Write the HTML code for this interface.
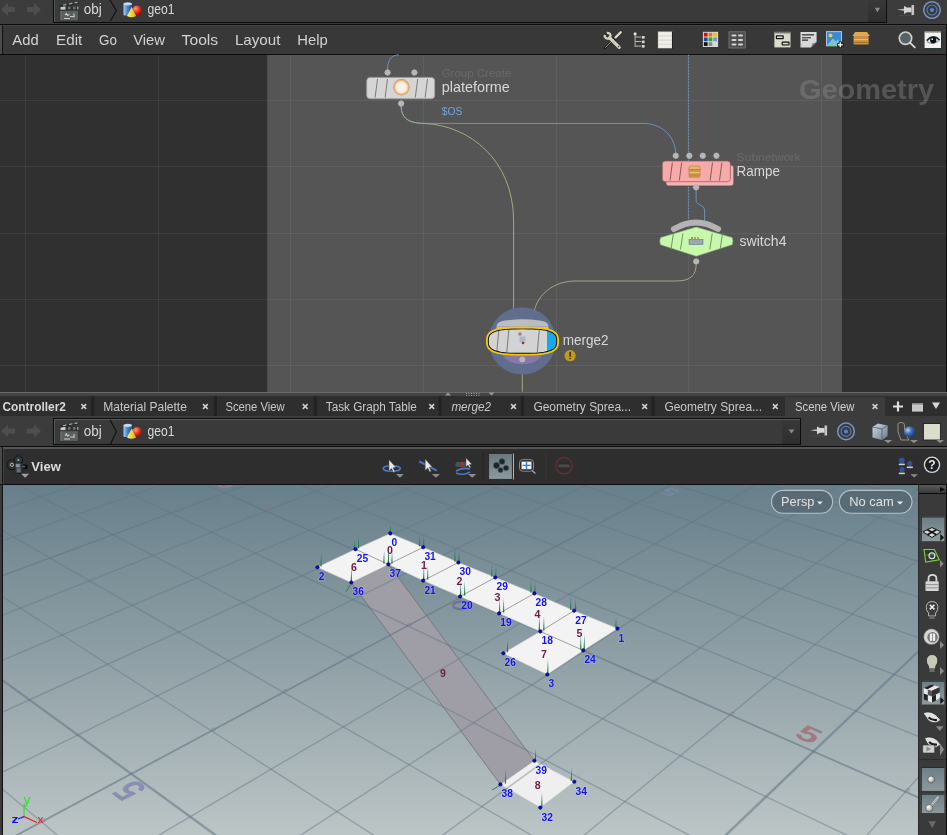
<!DOCTYPE html>
<html><head><meta charset="utf-8"><style>
html,body{margin:0;padding:0;background:#3a3a3a;overflow:hidden;width:947px;height:835px}
svg{display:block;font-family:"Liberation Sans", sans-serif;will-change:transform}
</style></head><body>
<svg width="947" height="835" viewBox="0 0 947 835"><rect x="0" y="0" width="947" height="835" fill="#3a3a3a"/><rect x="0" y="0" width="947" height="24" fill="#3c3c3c"/><path d="M1,9.5 L8,3 L8,7 L15,7 L15,12 L8,12 L8,16 Z" fill="#4e4e4e"/><path d="M41,9.5 L34,3 L34,7 L27,7 L27,12 L34,12 L34,16 Z" fill="#4e4e4e"/><rect x="53" y="0" width="834" height="23" fill="#0c0c0c"/><rect x="54" y="0" width="832" height="22" fill="#3a3a3a"/><rect x="54" y="0" width="1" height="22" fill="#5a5a5a"/><defs><linearGradient id="ddg" x1="0" y1="0" x2="0" y2="1"><stop offset="0" stop-color="#383838"/><stop offset="1" stop-color="#2e2e2e"/></linearGradient></defs><rect x="868" y="0" width="18" height="22" fill="url(#ddg)"/><path d="M874.8,7.8 L880,7.8 L877.4,12.2 Z" fill="#8e8e8e"/><rect x="0" y="24" width="947" height="1" fill="#0c0c0c"/><g transform="translate(59,1)"><rect x="0.8" y="9.3" width="18.6" height="10.6" fill="#5c605c"/><rect x="0.8" y="9.3" width="18.6" height="10.6" fill="none" stroke="#2a3432" stroke-width="0.8"/><rect x="1.6" y="10" width="0.9" height="9" fill="#5a7a5a"/><path d="M6,14 l1.5,-1.5 l1,2 l2,-1 M11,15.5 h4 M15,12.5 v4 M5,17.5 h6" stroke="#c8ccc8" stroke-width="1.1" fill="none"/><rect x="0.8" y="4.8" width="18.6" height="4" fill="#2e3230"/><rect x="1.5" y="5.2" width="5" height="3.4" fill="#c8d0cc"/><rect x="9" y="5.5" width="2.5" height="2.8" fill="#6a706c"/><rect x="14" y="5.5" width="2.5" height="2.8" fill="#6a706c"/><rect x="18" y="5.5" width="1.4" height="2.8" fill="#9aa09c"/><path d="M0.8,4.5 L19.5,0.8 L19.8,2.8 L1,6.2 Z" fill="#262a28"/><path d="M4,4.2 l3.5,-0.7 M10,3 l3.5,-0.7 M15.5,2 l3,-0.6" stroke="#b8bcb8" stroke-width="1.1"/></g><text x="83.7" y="14.3" font-size="14" fill="#d8d8d8" font-weight="normal" font-style="normal" textLength="18" lengthAdjust="spacingAndGlyphs">obj</text><path d="M110,0 L116.4,10.5 L110.5,21" stroke="#151515" stroke-width="1.3" fill="none"/><g transform="translate(123.5,2)"><defs><linearGradient id="cyla" x1="0" x2="1"><stop offset="0" stop-color="#a8cdf0"/><stop offset="0.45" stop-color="#4a86c8"/><stop offset="1" stop-color="#1d4f8c"/></linearGradient><radialGradient id="spha" cx="0.35" cy="0.3" r="0.7"><stop offset="0" stop-color="#ff9a80"/><stop offset="0.6" stop-color="#d92a1a"/><stop offset="1" stop-color="#8a1208"/></radialGradient><linearGradient id="conea" x1="0" x2="1"><stop offset="0" stop-color="#fff48a"/><stop offset="1" stop-color="#d8b400"/></linearGradient></defs><rect x="0" y="1.5" width="8.5" height="12" rx="1" fill="url(#cyla)"/><ellipse cx="4.25" cy="1.8" rx="4.25" ry="1.6" fill="#c0dcf4"/><circle cx="13.6" cy="8.6" r="5" fill="url(#spha)"/><path d="M8.2,5 L3.5,14 Q8,16.5 12.6,14 Z" fill="url(#conea)"/></g><text x="147.6" y="14.3" font-size="14" fill="#d8d8d8" font-weight="normal" font-style="normal" textLength="27" lengthAdjust="spacingAndGlyphs">geo1</text><g transform="translate(897,3.5)"><path d="M0,6.3 L7,5.3 L7,7.3 Z" fill="#c0c0c0"/><path d="M7,2.5 L10,4 L14.5,4 L14.5,8.8 L10,8.8 L7,10.5 Z" fill="#d6d6d6"/><rect x="14.5" y="1.5" width="2.6" height="10" fill="#c4c4c4"/><rect x="2" y="11.5" width="14" height="1" fill="#555" fill-opacity="0.5"/></g><circle cx="932" cy="10" r="8.3" fill="none" stroke="#7494cc" stroke-width="1.5"/><circle cx="932" cy="10" r="5" fill="none" stroke="#5a7ab4" stroke-width="1.1"/><circle cx="932" cy="10" r="2" fill="#4f88dc"/><rect x="0" y="25" width="947" height="29" fill="#383838"/><rect x="0" y="25" width="947" height="1" fill="#444444"/><rect x="0" y="25" width="2" height="29" fill="#4a4a4a"/><rect x="2" y="25" width="1" height="29" fill="#111111"/><rect x="946" y="25" width="1" height="30" fill="#0c0c0c"/><text x="12.3" y="44.6" font-size="15" fill="#d2d2d2" font-weight="normal" font-style="normal" textLength="26.4" lengthAdjust="spacingAndGlyphs">Add</text><text x="56.0" y="44.6" font-size="15" fill="#d2d2d2" font-weight="normal" font-style="normal" textLength="26.3" lengthAdjust="spacingAndGlyphs">Edit</text><text x="99.0" y="44.6" font-size="15" fill="#d2d2d2" font-weight="normal" font-style="normal" textLength="17.9" lengthAdjust="spacingAndGlyphs">Go</text><text x="133.20000000000002" y="44.6" font-size="15" fill="#d2d2d2" font-weight="normal" font-style="normal" textLength="31.7" lengthAdjust="spacingAndGlyphs">View</text><text x="181.6" y="44.6" font-size="15" fill="#d2d2d2" font-weight="normal" font-style="normal" textLength="36.6" lengthAdjust="spacingAndGlyphs">Tools</text><text x="234.9" y="44.6" font-size="15" fill="#d2d2d2" font-weight="normal" font-style="normal" textLength="45.6" lengthAdjust="spacingAndGlyphs">Layout</text><text x="297.2" y="44.6" font-size="15" fill="#d2d2d2" font-weight="normal" font-style="normal" textLength="30.5" lengthAdjust="spacingAndGlyphs">Help</text><rect x="0" y="54" width="947" height="1" fill="#0c0c0c"/><g><path d="M615.8,37.2 L604.8,48" stroke="#1a1a1a" stroke-width="2.4" stroke-linecap="round"/><path d="M615.8,37.2 L605.2,47.6" stroke="#b8b8a8" stroke-width="0.9"/><path d="M620.6,32.3 L615.6,37.4" stroke="#1a1a1a" stroke-width="3.6" stroke-linecap="round"/><path d="M620.6,32.3 L615.6,37.4" stroke="#d6d6c2" stroke-width="2.6" stroke-linecap="round"/><path d="M609.6,37.8 L619.2,47.4" stroke="#d2d2be" stroke-width="3.2" stroke-linecap="round"/><circle cx="618.6" cy="46.6" r="0.8" fill="#555"/><path d="M606.85,33.00 A2.9,2.9 0 1 1 604.80,35.05" stroke="#d6d6c2" stroke-width="2.3" fill="none"/></g><g fill="#d8d8c4"><rect x="633.8" y="32.6" width="2.6" height="2.6" fill="#f0f0f0"/><rect x="634.6" y="35" width="1" height="12" fill="#b8b8a8"/><rect x="635" y="36.5" width="6" height="1" fill="#b8b8a8"/><rect x="635" y="41" width="6" height="1" fill="#b8b8a8"/><rect x="635" y="45.6" width="6" height="1" fill="#b8b8a8"/><rect x="641.8" y="36" width="2.8" height="2.6"/><rect x="641.8" y="40.6" width="2.8" height="2.6"/><rect x="641.8" y="45" width="2.8" height="2.6"/></g><rect x="657.9" y="31.5" width="14.3" height="16.8" fill="#d0d0c8"/><rect x="658.5" y="32.2" width="13.1" height="3.2" fill="#f0f0ea"/><rect x="658.5" y="36.4" width="13.1" height="3.2" fill="#f0f0ea"/><rect x="658.5" y="40.6" width="13.1" height="3.2" fill="#f0f0ea"/><rect x="658.5" y="44.6" width="13.1" height="3.2" fill="#f0f0ea"/><rect x="672.2" y="32" width="0.8" height="16.8" fill="#151515"/><rect x="702.9" y="31.8" width="15.2" height="15.2" fill="#d8d8d4"/><rect x="703.9" y="32.8" width="3.7" height="3.7" fill="#d01010"/><rect x="708.6" y="32.8" width="3.7" height="3.7" fill="#f07010"/><rect x="713.3" y="32.8" width="3.7" height="3.7" fill="#f0c010"/><rect x="703.9" y="37.5" width="3.7" height="3.7" fill="#1a4a9a"/><rect x="708.6" y="37.5" width="3.7" height="3.7" fill="#20b020"/><rect x="713.3" y="37.5" width="3.7" height="3.7" fill="#6a9ad8"/><rect x="703.9" y="42.2" width="3.7" height="3.7" fill="#111111"/><rect x="708.6" y="42.2" width="3.7" height="3.7" fill="#8a8a8a"/><rect x="713.3" y="42.2" width="3.7" height="3.7" fill="#d8d8d8"/><rect x="729" y="31.8" width="16.2" height="16.2" fill="#4e4e4e" stroke="#8a8080" stroke-width="0.7"/><rect x="731.5" y="34.5" width="5" height="2" rx="1" fill="#d4d4d4"/><rect x="738" y="34.5" width="5" height="2" rx="1" fill="#d4d4d4"/><rect x="731.5" y="39" width="5" height="2" rx="1" fill="#d4d4d4"/><rect x="738" y="39" width="5" height="2" rx="1" fill="#d4d4d4"/><rect x="731.5" y="43.5" width="5" height="2" rx="1" fill="#d4d4d4"/><rect x="738" y="43.5" width="5" height="2" rx="1" fill="#d4d4d4"/><rect x="774.4" y="31.9" width="16.1" height="15.5" fill="#dcdccb"/><rect x="774.4" y="31.9" width="16.1" height="1.6" fill="#777"/><rect x="775.8" y="35.2" width="8" height="4" rx="1" fill="#111"/><rect x="777" y="36.4" width="5.6" height="1.6" fill="#ddd"/><rect x="781.6" y="41.6" width="8" height="4" rx="1" fill="#111"/><rect x="782.8" y="42.8" width="5.6" height="1.6" fill="#ddd"/><path d="M800.5,32 L816.6,32 L816.6,42 L811,47.5 L800.5,47.5 Z" fill="#d8d8d8"/><rect x="802" y="34" width="12" height="1.6" fill="#555"/><rect x="802" y="37" width="9" height="1.4" fill="#555"/><rect x="802" y="39.5" width="6" height="1.2" fill="#222"/><path d="M816.6,42 L811,47.5 L812.5,43.5 Z" fill="#777"/><rect x="826" y="31.1" width="16" height="15.2" fill="#a8c8e8"/><rect x="827" y="32.1" width="14" height="13.2" fill="#3a88d8"/><circle cx="830.5" cy="35.5" r="2" fill="#f0d020"/><path d="M827,45.3 L833,38.5 L836,41.5 L838,39.5 L841,43 L841,45.3 Z" fill="#7ac8c0"/><path d="M837,44.8 h6.7 M840.3,41.4 v6.7" stroke="#111" stroke-width="3.2"/><path d="M837.8,44.8 h5 M840.3,42.2 v5" stroke="#e8e8e8" stroke-width="1.6"/><path d="M852.5,36 L855,32 L867,32 L869.8,36 Z" fill="#e0a850"/><rect x="853.5" y="36" width="15.2" height="8.6" rx="1" fill="#c89040"/><rect x="854" y="39" width="14" height="1.2" fill="#e8b868"/><rect x="854" y="42" width="14" height="1" fill="#a87028"/><circle cx="905.5" cy="38.2" r="6.2" fill="#56636a" stroke="#d0d0c8" stroke-width="1.6"/><path d="M909.9,42.6 L914.8,47.4" stroke="#d8d8d8" stroke-width="1.8" stroke-linecap="round"/><rect x="924.6" y="31.7" width="16.6" height="16.6" fill="#f2f2f2"/><rect x="924.6" y="31.7" width="16.6" height="1.2" fill="#a8a8a0"/><rect x="941" y="31.7" width="0.9" height="17" fill="#1a2a2a"/><rect x="924.6" y="48.2" width="17.3" height="0.9" fill="#1a2a2a"/><path d="M926.8,40.6 Q933,33.6 939.6,40" stroke="#1a2a2a" stroke-width="1.7" fill="none"/><path d="M926.8,41.5 Q933,45.8 939.5,40.2" stroke="#9a9a9a" stroke-width="1.3" fill="none"/><circle cx="933.2" cy="40.2" r="3.1" fill="#111"/><circle cx="932.2" cy="39.2" r="0.9" fill="#e8e8e8"/><rect x="0" y="55" width="947" height="337" fill="#303030"/><rect x="267" y="55" width="575" height="337" fill="#555555"/><rect x="267" y="55" width="1" height="337" fill="#4c4c4c"/><rect x="25" y="55" width="1" height="337" fill="#ffffff" fill-opacity="0.062"/><rect x="158" y="55" width="1" height="337" fill="#ffffff" fill-opacity="0.062"/><rect x="290" y="55" width="1" height="337" fill="#ffffff" fill-opacity="0.062"/><rect x="423" y="55" width="1" height="337" fill="#ffffff" fill-opacity="0.062"/><rect x="556" y="55" width="1" height="337" fill="#ffffff" fill-opacity="0.062"/><rect x="688" y="55" width="1" height="337" fill="#ffffff" fill-opacity="0.062"/><rect x="821" y="55" width="1" height="337" fill="#ffffff" fill-opacity="0.062"/><rect x="0" y="100" width="947" height="1" fill="#ffffff" fill-opacity="0.062"/><rect x="0" y="166" width="947" height="1" fill="#ffffff" fill-opacity="0.062"/><rect x="0" y="233" width="947" height="1" fill="#ffffff" fill-opacity="0.062"/><rect x="0" y="299" width="947" height="1" fill="#ffffff" fill-opacity="0.062"/><rect x="0" y="365" width="947" height="1" fill="#ffffff" fill-opacity="0.062"/><text x="799" y="99.4" font-size="28" font-weight="bold" fill="#8a8a8a" fill-opacity="0.42" textLength="135" lengthAdjust="spacingAndGlyphs">Geometry</text><path d="M387.6,70 C387.6,60 391,55 399,54.8" stroke="#7090b8" stroke-width="1" fill="none"/><path d="M401.1,106 C401.5,118 408,123.4 425,123.4 L644,123.4 C664,124 675,138 675.8,153" stroke="#7090b8" stroke-width="1" fill="none"/><path d="M401.1,106 C401.5,118 408,123.4 425,123.4 C470,126 513,160 513.6,220 L513.6,322" stroke="#9cac80" stroke-width="1" fill="none"/><line x1="688.5" y1="54.8" x2="688.5" y2="220" stroke="#6f8fb5" stroke-width="1.2" stroke-dasharray="1.6,1.4"/><path d="M696.1,189 L696.1,200.5 C696.5,206 704.6,204 704.6,211 L704.6,221" stroke="#7090b8" stroke-width="1" fill="none"/><path d="M696.2,264 C696,276 690,281 676,281 L574,281 C548,282 533,300 532.5,322" stroke="#9cac80" stroke-width="1" fill="none"/><line x1="522.3" y1="360" x2="522.3" y2="391.6" stroke="#9cac80" stroke-width="1"/><rect x="366.7" y="77.4" width="68" height="21.4" rx="3.5" fill="#d5d5d5" stroke="#9c9c9c" stroke-width="0.8"/><line x1="377.5" y1="79" x2="375.1" y2="97.5" stroke="#707070" stroke-width="0.9"/><line x1="387.5" y1="79" x2="385.1" y2="97.5" stroke="#707070" stroke-width="0.9"/><line x1="417.7" y1="79" x2="415.3" y2="97.5" stroke="#707070" stroke-width="0.9"/><line x1="427.5" y1="79" x2="425.1" y2="97.5" stroke="#707070" stroke-width="0.9"/><defs><radialGradient id="orb" cx="0.5" cy="0.5" r="0.5"><stop offset="0" stop-color="#f6f4f0"/><stop offset="0.62" stop-color="#f2eee6"/><stop offset="0.8" stop-color="#f0c488"/><stop offset="1" stop-color="#d49040"/></radialGradient></defs><circle cx="401.4" cy="87.3" r="8.2" fill="url(#orb)"/><polygon points="390.80,72.50 389.86,74.76 387.60,75.70 385.34,74.76 384.40,72.50 385.34,70.24 387.60,69.30 389.86,70.24" fill="#b6b6b6"/><polygon points="417.60,72.50 416.66,74.76 414.40,75.70 412.14,74.76 411.20,72.50 412.14,70.24 414.40,69.30 416.66,70.24" fill="#b6b6b6"/><polygon points="404.30,103.50 403.36,105.76 401.10,106.70 398.84,105.76 397.90,103.50 398.84,101.24 401.10,100.30 403.36,101.24" fill="#b6b6b6"/><rect x="665.8" y="165" width="68" height="20.9" rx="3" fill="#f4b3b3" stroke="#5a3a3a" stroke-width="0.6"/><rect x="662.3" y="161" width="68.1" height="20.7" rx="3" fill="#f8a9a9" stroke="#8a5a5a" stroke-width="0.7"/><line x1="672.4000000000001" y1="162.5" x2="670.0" y2="180.5" stroke="#7a5050" stroke-width="0.9"/><line x1="681.7" y1="162.5" x2="679.3" y2="180.5" stroke="#7a5050" stroke-width="0.9"/><line x1="712.5" y1="162.5" x2="710.0999999999999" y2="180.5" stroke="#7a5050" stroke-width="0.9"/><line x1="721.9000000000001" y1="162.5" x2="719.5" y2="180.5" stroke="#7a5050" stroke-width="0.9"/><g><path d="M688.2,169.6 L689.8,166 L699.2,166 L700.8,169.6 Z" fill="#e8b868" stroke="#a07030" stroke-width="0.5"/><rect x="689" y="169.6" width="11" height="7.6" rx="1" fill="#d09a48" stroke="#a07030" stroke-width="0.5"/><rect x="689.5" y="172.2" width="10" height="1" fill="#f0c880"/><rect x="689.5" y="174.6" width="10" height="0.8" fill="#b88038"/></g><polygon points="679.00,155.80 678.06,158.06 675.80,159.00 673.54,158.06 672.60,155.80 673.54,153.54 675.80,152.60 678.06,153.54" fill="#b6b6b6"/><polygon points="692.50,155.80 691.56,158.06 689.30,159.00 687.04,158.06 686.10,155.80 687.04,153.54 689.30,152.60 691.56,153.54" fill="#b6b6b6"/><polygon points="706.00,155.80 705.06,158.06 702.80,159.00 700.54,158.06 699.60,155.80 700.54,153.54 702.80,152.60 705.06,153.54" fill="#b6b6b6"/><polygon points="719.60,155.80 718.66,158.06 716.40,159.00 714.14,158.06 713.20,155.80 714.14,153.54 716.40,152.60 718.66,153.54" fill="#b6b6b6"/><polygon points="699.30,187.20 698.36,189.46 696.10,190.40 693.84,189.46 692.90,187.20 693.84,184.94 696.10,184.00 698.36,184.94" fill="#b6b6b6"/><path d="M674,229 Q696,216 718,229" stroke="#b3b3b3" stroke-width="6" stroke-linecap="round" fill="none"/><path d="M660.5,237.6 L696.2,227 L732.2,237.6 Q733.6,241.2 732.2,244.8 L696.2,256.3 L660.5,244.8 Q659.1,241.2 660.5,237.6 Z" fill="#c8f8ac" stroke="#7e9e6e" stroke-width="0.6" stroke-linejoin="round"/><line x1="673.4000000000001" y1="233.5" x2="671.0" y2="249.5" stroke="#6a8a5a" stroke-width="0.9"/><line x1="682.9000000000001" y1="233.5" x2="680.5" y2="249.5" stroke="#6a8a5a" stroke-width="0.9"/><line x1="712.2" y1="233.5" x2="709.8" y2="249.5" stroke="#6a8a5a" stroke-width="0.9"/><line x1="722.5" y1="233.5" x2="720.0999999999999" y2="249.5" stroke="#6a8a5a" stroke-width="0.9"/><g transform="translate(689,237)"><rect x="0" y="2.5" width="14" height="5" fill="#9aa8b8" stroke="#5a6070" stroke-width="0.5"/><circle cx="3" cy="1" r="0.9" fill="#c05030"/><circle cx="6" cy="1" r="0.9" fill="#50a050"/><circle cx="9" cy="1" r="0.9" fill="#c08030"/></g><polygon points="699.40,261.40 698.46,263.66 696.20,264.60 693.94,263.66 693.00,261.40 693.94,259.14 696.20,258.20 698.46,259.14" fill="#b6b6b6"/><circle cx="522.3" cy="340.9" r="33.7" fill="#5e6e8c"/><ellipse cx="522.3" cy="352.5" rx="20" ry="11.5" fill="#8778a6"/><path d="M496.5,326.5 Q496.5,321.5 505,320.5 Q522.3,318.2 539.6,320.5 Q548.5,321.5 548.5,326.5 Z" fill="#bdbdbd"/><path d="M496.5,326.5 L548.5,326.5 L548.5,329 L496.5,329 Z" fill="#bdbdbd"/><defs><clipPath id="mclip"><path d="M556.80,341.10 L556.71,343.52 L556.45,344.93 L556.02,346.10 L555.41,347.12 L554.62,348.03 L553.66,348.85 L552.53,349.59 L551.22,350.26 L549.72,350.86 L548.05,351.40 L546.18,351.87 L544.11,352.28 L541.82,352.62 L539.27,352.90 L536.43,353.12 L533.18,353.28 L529.24,353.37 L522.50,353.40 L515.76,353.37 L511.82,353.28 L508.57,353.12 L505.73,352.90 L503.18,352.62 L500.89,352.28 L498.82,351.87 L496.95,351.40 L495.28,350.86 L493.78,350.26 L492.47,349.59 L491.34,348.85 L490.38,348.03 L489.59,347.12 L488.98,346.10 L488.55,344.93 L488.29,343.52 L488.20,341.10 L488.29,338.68 L488.55,337.27 L488.98,336.10 L489.59,335.08 L490.38,334.17 L491.34,333.35 L492.47,332.61 L493.78,331.94 L495.28,331.34 L496.95,330.80 L498.82,330.33 L500.89,329.92 L503.18,329.58 L505.73,329.30 L508.57,329.08 L511.82,328.92 L515.76,328.83 L522.50,328.80 L529.24,328.83 L533.18,328.92 L536.43,329.08 L539.27,329.30 L541.82,329.58 L544.11,329.92 L546.18,330.33 L548.05,330.80 L549.72,331.34 L551.22,331.94 L552.53,332.61 L553.66,333.35 L554.62,334.17 L555.41,335.08 L556.02,336.10 L556.45,337.27 L556.71,338.68 Z"/></clipPath></defs><path d="M556.80,341.10 L556.71,343.52 L556.45,344.93 L556.02,346.10 L555.41,347.12 L554.62,348.03 L553.66,348.85 L552.53,349.59 L551.22,350.26 L549.72,350.86 L548.05,351.40 L546.18,351.87 L544.11,352.28 L541.82,352.62 L539.27,352.90 L536.43,353.12 L533.18,353.28 L529.24,353.37 L522.50,353.40 L515.76,353.37 L511.82,353.28 L508.57,353.12 L505.73,352.90 L503.18,352.62 L500.89,352.28 L498.82,351.87 L496.95,351.40 L495.28,350.86 L493.78,350.26 L492.47,349.59 L491.34,348.85 L490.38,348.03 L489.59,347.12 L488.98,346.10 L488.55,344.93 L488.29,343.52 L488.20,341.10 L488.29,338.68 L488.55,337.27 L488.98,336.10 L489.59,335.08 L490.38,334.17 L491.34,333.35 L492.47,332.61 L493.78,331.94 L495.28,331.34 L496.95,330.80 L498.82,330.33 L500.89,329.92 L503.18,329.58 L505.73,329.30 L508.57,329.08 L511.82,328.92 L515.76,328.83 L522.50,328.80 L529.24,328.83 L533.18,328.92 L536.43,329.08 L539.27,329.30 L541.82,329.58 L544.11,329.92 L546.18,330.33 L548.05,330.80 L549.72,331.34 L551.22,331.94 L552.53,332.61 L553.66,333.35 L554.62,334.17 L555.41,335.08 L556.02,336.10 L556.45,337.27 L556.71,338.68 Z" fill="#d3d3d3"/><rect x="547" y="325" width="14" height="35" fill="#16a8ec" clip-path="url(#mclip)"/><line x1="498.8" y1="330" x2="496.8" y2="352" stroke="#707070" stroke-width="0.9" clip-path="url(#mclip)"/><line x1="508.8" y1="330" x2="506.8" y2="352" stroke="#707070" stroke-width="0.9" clip-path="url(#mclip)"/><line x1="539.3" y1="330" x2="537.3" y2="352" stroke="#707070" stroke-width="0.9" clip-path="url(#mclip)"/><path d="M556.80,341.10 L556.71,343.52 L556.45,344.93 L556.02,346.10 L555.41,347.12 L554.62,348.03 L553.66,348.85 L552.53,349.59 L551.22,350.26 L549.72,350.86 L548.05,351.40 L546.18,351.87 L544.11,352.28 L541.82,352.62 L539.27,352.90 L536.43,353.12 L533.18,353.28 L529.24,353.37 L522.50,353.40 L515.76,353.37 L511.82,353.28 L508.57,353.12 L505.73,352.90 L503.18,352.62 L500.89,352.28 L498.82,351.87 L496.95,351.40 L495.28,350.86 L493.78,350.26 L492.47,349.59 L491.34,348.85 L490.38,348.03 L489.59,347.12 L488.98,346.10 L488.55,344.93 L488.29,343.52 L488.20,341.10 L488.29,338.68 L488.55,337.27 L488.98,336.10 L489.59,335.08 L490.38,334.17 L491.34,333.35 L492.47,332.61 L493.78,331.94 L495.28,331.34 L496.95,330.80 L498.82,330.33 L500.89,329.92 L503.18,329.58 L505.73,329.30 L508.57,329.08 L511.82,328.92 L515.76,328.83 L522.50,328.80 L529.24,328.83 L533.18,328.92 L536.43,329.08 L539.27,329.30 L541.82,329.58 L544.11,329.92 L546.18,330.33 L548.05,330.80 L549.72,331.34 L551.22,331.94 L552.53,332.61 L553.66,333.35 L554.62,334.17 L555.41,335.08 L556.02,336.10 L556.45,337.27 L556.71,338.68 Z" fill="none" stroke="#0a0a0a" stroke-width="1.1"/><path d="M558.10,341.10 L558.01,343.77 L557.74,345.33 L557.29,346.62 L556.65,347.75 L555.84,348.76 L554.84,349.67 L553.67,350.49 L552.30,351.23 L550.76,351.89 L549.02,352.49 L547.08,353.01 L544.93,353.46 L542.55,353.84 L539.91,354.15 L536.96,354.39 L533.58,354.56 L529.50,354.67 L522.50,354.70 L515.50,354.67 L511.42,354.56 L508.04,354.39 L505.09,354.15 L502.45,353.84 L500.07,353.46 L497.92,353.01 L495.98,352.49 L494.24,351.89 L492.70,351.23 L491.33,350.49 L490.16,349.67 L489.16,348.76 L488.35,347.75 L487.71,346.62 L487.26,345.33 L486.99,343.77 L486.90,341.10 L486.99,338.43 L487.26,336.87 L487.71,335.58 L488.35,334.45 L489.16,333.44 L490.16,332.53 L491.33,331.71 L492.70,330.97 L494.24,330.31 L495.98,329.71 L497.92,329.19 L500.07,328.74 L502.45,328.36 L505.09,328.05 L508.04,327.81 L511.42,327.64 L515.50,327.53 L522.50,327.50 L529.50,327.53 L533.58,327.64 L536.96,327.81 L539.91,328.05 L542.55,328.36 L544.93,328.74 L547.08,329.19 L549.02,329.71 L550.76,330.31 L552.30,330.97 L553.67,331.71 L554.84,332.53 L555.84,333.44 L556.65,334.45 L557.29,335.58 L557.74,336.87 L558.01,338.43 Z" fill="none" stroke="#f5c800" stroke-width="1.8"/><g transform="translate(514.5,331.5)"><rect x="1" y="1" width="5" height="4" fill="#c8d4e0"/><rect x="4" y="1" width="3" height="3" fill="#b03030" fill-opacity="0.6"/><rect x="5" y="5" width="6" height="6" fill="#a8b8c8"/><rect x="1" y="11" width="7" height="3" fill="#d0d8e4"/><circle cx="8.5" cy="11.5" r="1.3" fill="#c02020"/></g><polygon points="525.50,359.40 524.56,361.66 522.30,362.60 520.04,361.66 519.10,359.40 520.04,357.14 522.30,356.20 524.56,357.14" fill="#b6b6b6"/><circle cx="570.1" cy="355.7" r="5.6" fill="#c49a1c"/><rect x="569.4" y="351.8" width="1.5" height="5" fill="#3a2a00"/><rect x="569.4" y="357.8" width="1.5" height="1.4" fill="#3a2a00"/><text x="441.7" y="76.7" font-size="10" fill="#6a6a6a" font-weight="normal" font-style="normal" textLength="69.6" lengthAdjust="spacingAndGlyphs">Group Create</text><text x="441.7" y="91.6" font-size="14.5" fill="#d8d8d8" font-weight="normal" font-style="normal" textLength="68" lengthAdjust="spacingAndGlyphs">plateforme</text><text x="441.7" y="114.9" font-size="11" fill="#6ea6de" font-weight="normal" font-style="normal" textLength="20.6" lengthAdjust="spacingAndGlyphs">$OS</text><text x="736.6" y="160.5" font-size="10" fill="#6a6a6a" font-weight="normal" font-style="normal" textLength="63.9" lengthAdjust="spacingAndGlyphs">Subnetwork</text><text x="736.6" y="175.7" font-size="14.5" fill="#d8d8d8" font-weight="normal" font-style="normal" textLength="43.3" lengthAdjust="spacingAndGlyphs">Rampe</text><text x="739.5" y="246" font-size="14.5" fill="#d8d8d8" font-weight="normal" font-style="normal" textLength="47" lengthAdjust="spacingAndGlyphs">switch4</text><text x="562.7" y="344.6" font-size="14.5" fill="#d8d8d8" font-weight="normal" font-style="normal" textLength="45.9" lengthAdjust="spacingAndGlyphs">merge2</text><rect x="946" y="55" width="1" height="337" fill="#0c0c0c"/><rect x="0" y="392" width="947" height="1" fill="#6a6a6a"/><rect x="0" y="393" width="947" height="3" fill="#444444"/><path d="M445,395.5 L451,395.5 L448.0,392.5 Z" fill="#9a9a9a"/><path d="M488.5,392.5 L494.5,392.5 L491.5,395.5 Z" fill="#9a9a9a"/><rect x="466.0" y="393" width="1" height="1" fill="#9a9a9a"/><rect x="466.0" y="395" width="1" height="1" fill="#9a9a9a"/><rect x="468.5" y="393" width="1" height="1" fill="#9a9a9a"/><rect x="468.5" y="395" width="1" height="1" fill="#9a9a9a"/><rect x="471.0" y="393" width="1" height="1" fill="#9a9a9a"/><rect x="471.0" y="395" width="1" height="1" fill="#9a9a9a"/><rect x="473.5" y="393" width="1" height="1" fill="#9a9a9a"/><rect x="473.5" y="395" width="1" height="1" fill="#9a9a9a"/><rect x="476.0" y="393" width="1" height="1" fill="#9a9a9a"/><rect x="476.0" y="395" width="1" height="1" fill="#9a9a9a"/><rect x="478.5" y="393" width="1" height="1" fill="#9a9a9a"/><rect x="478.5" y="395" width="1" height="1" fill="#9a9a9a"/><rect x="0" y="396" width="947" height="20" fill="#2e2e2e"/><rect x="91.3" y="396" width="3" height="20" fill="#222222"/><rect x="213.9" y="396" width="3" height="20" fill="#222222"/><rect x="313.8" y="396" width="3" height="20" fill="#222222"/><rect x="438.5" y="396" width="3" height="20" fill="#222222"/><rect x="520.9" y="396" width="3" height="20" fill="#222222"/><rect x="651.5" y="396" width="3" height="20" fill="#222222"/><rect x="785" y="397" width="100" height="19" fill="#3c3c3c"/><text x="2.5" y="411.2" font-size="12.5" fill="#d8d8d8" font-weight="bold" font-style="normal" textLength="63.4" lengthAdjust="spacingAndGlyphs">Controller2</text><path d="M81.39999999999999,404.1 L86.2,408.9 M86.2,404.1 L81.39999999999999,408.9" stroke="#d0d0d0" stroke-width="1.5"/><text x="103.3" y="411.1" font-size="12.5" fill="#c8c8c8" font-weight="normal" font-style="normal" textLength="83.6" lengthAdjust="spacingAndGlyphs">Material Palette</text><path d="M203.0,404.1 L207.8,408.9 M207.8,404.1 L203.0,408.9" stroke="#d0d0d0" stroke-width="1.5"/><text x="225.4" y="411.1" font-size="12.5" fill="#c8c8c8" font-weight="normal" font-style="normal" textLength="59.3" lengthAdjust="spacingAndGlyphs">Scene View</text><path d="M302.8,404.1 L307.59999999999997,408.9 M307.59999999999997,404.1 L302.8,408.9" stroke="#d0d0d0" stroke-width="1.5"/><text x="325.8" y="411.1" font-size="12.5" fill="#c8c8c8" font-weight="normal" font-style="normal" textLength="91.1" lengthAdjust="spacingAndGlyphs">Task Graph Table</text><path d="M429.3,404.1 L434.09999999999997,408.9 M434.09999999999997,404.1 L429.3,408.9" stroke="#d0d0d0" stroke-width="1.5"/><text x="451.4" y="411.1" font-size="12.5" fill="#c8c8c8" font-weight="normal" font-style="italic" textLength="39.6" lengthAdjust="spacingAndGlyphs">merge2</text><path d="M511.1,404.1 L515.9,408.9 M515.9,404.1 L511.1,408.9" stroke="#d0d0d0" stroke-width="1.5"/><text x="533.4" y="411.1" font-size="12.5" fill="#c8c8c8" font-weight="normal" font-style="normal" textLength="97.6" lengthAdjust="spacingAndGlyphs">Geometry Sprea...</text><path d="M642.3000000000001,404.1 L647.1,408.9 M647.1,404.1 L642.3000000000001,408.9" stroke="#d0d0d0" stroke-width="1.5"/><text x="664.4" y="411.1" font-size="12.5" fill="#c8c8c8" font-weight="normal" font-style="normal" textLength="97.6" lengthAdjust="spacingAndGlyphs">Geometry Sprea...</text><path d="M772.9,404.1 L777.6999999999999,408.9 M777.6999999999999,404.1 L772.9,408.9" stroke="#d0d0d0" stroke-width="1.5"/><text x="795" y="411.1" font-size="12.5" fill="#d0d0d0" font-weight="normal" font-style="normal" textLength="59.4" lengthAdjust="spacingAndGlyphs">Scene View</text><path d="M872.6,404.1 L877.4,408.9 M877.4,404.1 L872.6,408.9" stroke="#d0d0d0" stroke-width="1.5"/><path d="M893,406.5 h10 M898,401.5 v10" stroke="#e0e0e0" stroke-width="2.2"/><rect x="912" y="403" width="11" height="8.6" fill="#c8c8c8"/><rect x="912" y="403" width="11" height="1.6" fill="#888"/><path d="M932,402.5 L940,402.5 L936.0,409 Z" fill="#d8d8d8"/><rect x="0" y="416" width="947" height="30" fill="#3c3c3c"/><path d="M1,431 L8,424.5 L8,428.5 L15,428.5 L15,433.5 L8,433.5 L8,437.5 Z" fill="#4e4e4e"/><path d="M41,431 L34,424.5 L34,428.5 L27,428.5 L27,433.5 L34,433.5 L34,437.5 Z" fill="#4e4e4e"/><rect x="53" y="418" width="748" height="27" fill="#0c0c0c"/><rect x="54" y="419" width="746" height="25" fill="#3a3a3a"/><rect x="54" y="419" width="746" height="1" fill="#5a5a5a"/><rect x="54" y="419" width="1" height="25" fill="#5a5a5a"/><rect x="782" y="420" width="18" height="24" fill="url(#ddg)"/><path d="M788.5,429.5 L794.5,429.5 L791.5,433.5 Z" fill="#8a8a8a"/><g transform="translate(59,421.5)"><rect x="0.8" y="9.3" width="18.6" height="10.6" fill="#5c605c"/><rect x="0.8" y="9.3" width="18.6" height="10.6" fill="none" stroke="#2a3432" stroke-width="0.8"/><rect x="1.6" y="10" width="0.9" height="9" fill="#5a7a5a"/><path d="M6,14 l1.5,-1.5 l1,2 l2,-1 M11,15.5 h4 M15,12.5 v4 M5,17.5 h6" stroke="#c8ccc8" stroke-width="1.1" fill="none"/><rect x="0.8" y="4.8" width="18.6" height="4" fill="#2e3230"/><rect x="1.5" y="5.2" width="5" height="3.4" fill="#c8d0cc"/><rect x="9" y="5.5" width="2.5" height="2.8" fill="#6a706c"/><rect x="14" y="5.5" width="2.5" height="2.8" fill="#6a706c"/><rect x="18" y="5.5" width="1.4" height="2.8" fill="#9aa09c"/><path d="M0.8,4.5 L19.5,0.8 L19.8,2.8 L1,6.2 Z" fill="#262a28"/><path d="M4,4.2 l3.5,-0.7 M10,3 l3.5,-0.7 M15.5,2 l3,-0.6" stroke="#b8bcb8" stroke-width="1.1"/></g><text x="83.7" y="435.5" font-size="14" fill="#d8d8d8" font-weight="normal" font-style="normal" textLength="18" lengthAdjust="spacingAndGlyphs">obj</text><path d="M110,420 L116.4,431.5 L110.5,444" stroke="#151515" stroke-width="1.3" fill="none"/><g transform="translate(123.5,423.5)"><defs><linearGradient id="cylb" x1="0" x2="1"><stop offset="0" stop-color="#a8cdf0"/><stop offset="0.45" stop-color="#4a86c8"/><stop offset="1" stop-color="#1d4f8c"/></linearGradient><radialGradient id="sphb" cx="0.35" cy="0.3" r="0.7"><stop offset="0" stop-color="#ff9a80"/><stop offset="0.6" stop-color="#d92a1a"/><stop offset="1" stop-color="#8a1208"/></radialGradient><linearGradient id="coneb" x1="0" x2="1"><stop offset="0" stop-color="#fff48a"/><stop offset="1" stop-color="#d8b400"/></linearGradient></defs><rect x="0" y="1.5" width="8.5" height="12" rx="1" fill="url(#cylb)"/><ellipse cx="4.25" cy="1.8" rx="4.25" ry="1.6" fill="#c0dcf4"/><circle cx="13.6" cy="8.6" r="5" fill="url(#sphb)"/><path d="M8.2,5 L3.5,14 Q8,16.5 12.6,14 Z" fill="url(#coneb)"/></g><text x="147.6" y="435.5" font-size="14" fill="#d8d8d8" font-weight="normal" font-style="normal" textLength="27" lengthAdjust="spacingAndGlyphs">geo1</text><g transform="translate(810,424)"><path d="M0,6.3 L7,5.3 L7,7.3 Z" fill="#c0c0c0"/><path d="M7,2.5 L10,4 L14.5,4 L14.5,8.8 L10,8.8 L7,10.5 Z" fill="#d6d6d6"/><rect x="14.5" y="1.5" width="2.6" height="10" fill="#c4c4c4"/><rect x="2" y="11.5" width="14" height="1" fill="#555" fill-opacity="0.5"/></g><circle cx="846" cy="431.4" r="8.3" fill="none" stroke="#7494cc" stroke-width="1.5"/><circle cx="846" cy="431.4" r="5" fill="none" stroke="#5a7ab4" stroke-width="1.1"/><circle cx="846" cy="431.4" r="2" fill="#4f88dc"/><defs><linearGradient id="cubeg" x1="0" y1="0" x2="1" y2="1"><stop offset="0" stop-color="#d0dce8"/><stop offset="1" stop-color="#6a7a88"/></linearGradient><radialGradient id="bsph" cx="0.35" cy="0.35" r="0.7"><stop offset="0" stop-color="#b8d0f0"/><stop offset="0.5" stop-color="#3a6ab0"/><stop offset="1" stop-color="#1a3a78"/></radialGradient></defs><path d="M872.5,427 L878,423.5 L887.6,425.5 L887.6,436 L882,440 L872.5,437.5 Z" fill="url(#cubeg)"/><path d="M872.5,427 L882,429 L887.6,425.5 M882,429 L882,440" stroke="#4a5a68" stroke-width="0.8" fill="none"/><path d="M883.9,440 L892.2,440 L888.05,443.3 Z" fill="#8c8c8c"/><path d="M898,424 Q898,422.5 901,422.5 Q904.5,422.5 904.5,425 L904.5,432 L909,440 L901,440 L898,432 Z" fill="none" stroke="#9a9a8a" stroke-width="0.9"/><circle cx="909.6" cy="431.8" r="5.6" fill="url(#bsph)"/><path d="M910,440 L917.9,440 L913.95,443.3 Z" fill="#8c8c8c"/><rect x="923.4" y="423.5" width="17" height="16.5" fill="#dcdccc" stroke="#1a2220" stroke-width="0.9"/><path d="M936.3,440 L944,440 L940.15,443.3 Z" fill="#8c8c8c"/><rect x="0" y="446" width="947" height="1" fill="#0c0c0c"/><rect x="0" y="447" width="947" height="38" fill="#2e2e2e"/><rect x="0" y="447" width="947" height="2" fill="#555555"/><rect x="0" y="447" width="2" height="38" fill="#4a4a4a"/><rect x="2" y="447" width="1" height="38" fill="#111111"/><rect x="3" y="449" width="1" height="35" fill="#444444"/><rect x="0" y="484" width="947" height="1" fill="#0c0c0c"/><text x="31.3" y="471" font-size="13" fill="#dcdcdc" font-weight="bold" font-style="normal" textLength="29.5" lengthAdjust="spacingAndGlyphs">View</text><circle cx="11.9" cy="464.8" r="5" fill="#2a3236" stroke="#0e0e0e" stroke-width="0.8"/><circle cx="18.4" cy="460" r="4.2" fill="#2e383c" stroke="#0e0e0e" stroke-width="0.8"/><rect x="15" y="463" width="7" height="10.5" rx="1" fill="#3e4650" stroke="#111" stroke-width="0.6"/><rect x="15.8" y="463.8" width="4" height="3.5" fill="#8a8c98"/><rect x="17" y="468.5" width="3.5" height="3.5" fill="#6a6c7a"/><ellipse cx="25.2" cy="466.8" rx="2.6" ry="2.6" fill="#111"/><rect x="22" y="465.8" width="3" height="1.5" fill="#4a6a6a"/><circle cx="11.9" cy="464.8" r="1.6" fill="none" stroke="#c8c8c8" stroke-width="0.9"/><circle cx="18.4" cy="460" r="1" fill="#a0a8a8"/><path d="M21.1,473.8 L29.2,473.8 L25.15,477.8 Z" fill="#a0a0a0"/><ellipse cx="391.7" cy="468.5" rx="8.6" ry="2.8" fill="none" stroke="#4a78c8" stroke-width="1.6"/><path d="M389,459.7 L389,471 L391.5,468.5 L393.5,472.5 L395,471.8 L393,467.8 L396,467.5 Z" fill="#e8e8e8" stroke="#444" stroke-width="0.5"/><path d="M396,474 L403.8,474 L399.9,477.8 Z" fill="#8c8c8c"/><path d="M419.2,461.3 L436.8,470.7" stroke="#4a78c8" stroke-width="2"/><path d="M425.2,459 L425.2,470.5 L427.7,468 L429.7,472 L431.2,471.3 L429.2,467.3 L432.2,467 Z" fill="#e8e8e8" stroke="#444" stroke-width="0.5"/><path d="M431.8,474 L440,474 L435.9,477.8 Z" fill="#8c8c8c"/><rect x="455" y="461.5" width="12" height="6" rx="2.5" fill="#4a5250" stroke="#222" stroke-width="0.5"/><rect x="462" y="461.5" width="1" height="6" fill="#c03030"/><path d="M456,471 Q462,467 470,469 M456,473 Q463,476 470,472" stroke="#4a78c8" stroke-width="1.6" fill="none"/><path d="M466,458 L466,467 L468,465 L469.5,468 L470.8,467.4 L469.4,464.6 L471.8,464.3 Z" fill="#e8e8e8" stroke="#444" stroke-width="0.5"/><path d="M468,474 L476.3,474 L472.15,477.8 Z" fill="#8c8c8c"/><rect x="482.5" y="453" width="1" height="26" fill="#252525"/><defs><linearGradient id="actb" x1="0" y1="0" x2="0" y2="1"><stop offset="0" stop-color="#687a80"/><stop offset="1" stop-color="#8a9a9e"/></linearGradient></defs><rect x="489.1" y="454" width="22.8" height="24.9" fill="url(#actb)"/><rect x="513" y="453.5" width="1" height="26" fill="#b0b0b0"/><g fill="#1e2428" stroke="#5a6a70" stroke-width="0.6"><circle cx="496.5" cy="465.5" r="3.2"/><circle cx="502" cy="461.5" r="3"/><circle cx="506" cy="468" r="2.8"/><circle cx="500.5" cy="470" r="2.6"/></g><rect x="519.5" y="459.6" width="14" height="11.6" rx="3" fill="#2a2a2a" stroke="#8a8a8a" stroke-width="1"/><rect x="521.5" y="461.6" width="10" height="7.6" fill="#eef2f8"/><path d="M526.5,462 v7 M522.5,465.4 h8" stroke="#3a7ad0" stroke-width="1.4"/><path d="M532,470.5 L535.5,473.5" stroke="#aaa" stroke-width="1.2"/><rect x="545.5" y="453" width="1" height="26" fill="#383838"/><circle cx="564.1" cy="465.7" r="8.2" fill="none" stroke="#6a3030" stroke-width="1.3"/><rect x="558" y="464" width="12.2" height="3.8" rx="1.5" fill="#4a4a4a" stroke="#222" stroke-width="0.6"/><g fill="#3050a0"><circle cx="901.8" cy="460.5" r="2.9"/><circle cx="909.8" cy="463.6" r="2.6"/><circle cx="902" cy="469.5" r="2.6"/></g><g fill="#cfcfcf"><rect x="898.8" y="463.6" width="6" height="1.6"/><rect x="906.8" y="466.5" width="6" height="1.6"/><rect x="898.8" y="472.6" width="6" height="1.6"/></g><path d="M910.4,474.2 L918,474.2 L914.2,477.6 Z" fill="#8c8c8c"/><circle cx="932" cy="464.8" r="7.6" fill="#1c2024" stroke="#d8d8d8" stroke-width="1.3"/><text x="932" y="469.3" font-size="12" font-weight="bold" fill="#e8e8e8" text-anchor="middle">?</text><defs><linearGradient id="vpg" x1="0" y1="0" x2="0" y2="1"><stop offset="0" stop-color="#68808b"/><stop offset="0.5" stop-color="#8fa0a6"/><stop offset="1" stop-color="#bcc5c6"/></linearGradient><clipPath id="vpc"><rect x="3" y="485" width="915" height="350"/></clipPath></defs><rect x="0" y="485" width="2" height="350" fill="#3a3a3a"/><rect x="2" y="485" width="1" height="350" fill="#111111"/><rect x="3" y="485" width="915" height="350" fill="url(#vpg)"/><g clip-path="url(#vpc)"><polygon points="351.3,582.5 388.4,564.4 534.4,760.7 500.4,784.4" fill="#9f9ea7" stroke="#707078" stroke-width="0.8"/><polygon points="500.4,784.4 534.4,760.7 574.3,781.7 540.3,807.6" fill="#efefef" stroke="#c8c8c8" stroke-width="0.6"/><line x1="239.0" y1="238.7" x2="-933.4" y2="464.8" stroke="#627686" stroke-width="1.4" stroke-opacity="0.45"/><line x1="610.7" y1="235.3" x2="1673.6" y2="417.2" stroke="#627686" stroke-width="1.4" stroke-opacity="0.45"/><polygon points="238.6,238.7 239.3,238.8 -933.4,465.0 -933.4,464.5" fill="#627686" fill-opacity="0.32"/><polygon points="611.0,235.3 610.4,235.4 1673.7,417.4 1673.6,417.0" fill="#627686" fill-opacity="0.32"/><line x1="260.0" y1="243.5" x2="-931.7" y2="481.0" stroke="#627686" stroke-width="1.4" stroke-opacity="0.45"/><line x1="591.3" y1="240.4" x2="1675.0" y2="431.6" stroke="#627686" stroke-width="1.4" stroke-opacity="0.45"/><line x1="281.9" y1="248.4" x2="-930.0" y2="498.2" stroke="#627686" stroke-width="1.4" stroke-opacity="0.45"/><line x1="571.0" y1="245.7" x2="1676.4" y2="447.0" stroke="#627686" stroke-width="1.4" stroke-opacity="0.45"/><line x1="304.5" y1="253.5" x2="-928.1" y2="516.7" stroke="#627686" stroke-width="1.4" stroke-opacity="0.45"/><line x1="550.0" y1="251.1" x2="1677.9" y2="463.4" stroke="#627686" stroke-width="1.4" stroke-opacity="0.45"/><line x1="327.9" y1="258.8" x2="-926.1" y2="536.4" stroke="#627686" stroke-width="1.4" stroke-opacity="0.45"/><line x1="528.1" y1="256.8" x2="1679.6" y2="481.0" stroke="#627686" stroke-width="1.4" stroke-opacity="0.45"/><line x1="352.2" y1="264.3" x2="-923.9" y2="557.6" stroke="#627686" stroke-width="1.4" stroke-opacity="0.45"/><line x1="505.2" y1="262.7" x2="1681.3" y2="499.9" stroke="#627686" stroke-width="1.4" stroke-opacity="0.45"/><polygon points="351.8,264.2 352.6,264.4 -923.9,558.0 -924.0,557.3" fill="#627686" fill-opacity="0.32"/><polygon points="505.6,262.6 504.9,262.8 1681.4,500.2 1681.3,499.5" fill="#627686" fill-opacity="0.32"/><line x1="377.4" y1="270.0" x2="-921.6" y2="580.5" stroke="#627686" stroke-width="1.4" stroke-opacity="0.45"/><line x1="481.5" y1="268.9" x2="1683.2" y2="520.2" stroke="#627686" stroke-width="1.4" stroke-opacity="0.45"/><line x1="403.6" y1="275.9" x2="-919.1" y2="605.2" stroke="#627686" stroke-width="1.4" stroke-opacity="0.45"/><line x1="456.7" y1="275.3" x2="1685.3" y2="542.1" stroke="#627686" stroke-width="1.4" stroke-opacity="0.45"/><line x1="430.8" y1="282.1" x2="-916.3" y2="631.9" stroke="#627686" stroke-width="1.4" stroke-opacity="0.45"/><line x1="430.8" y1="282.1" x2="1687.5" y2="565.9" stroke="#627686" stroke-width="1.4" stroke-opacity="0.45"/><line x1="459.1" y1="288.5" x2="-913.4" y2="660.9" stroke="#627686" stroke-width="1.4" stroke-opacity="0.45"/><line x1="403.7" y1="289.1" x2="1689.9" y2="591.8" stroke="#627686" stroke-width="1.4" stroke-opacity="0.45"/><line x1="488.5" y1="295.1" x2="-910.1" y2="692.6" stroke="#627686" stroke-width="1.4" stroke-opacity="0.45"/><line x1="375.4" y1="296.4" x2="1692.5" y2="620.0" stroke="#627686" stroke-width="1.4" stroke-opacity="0.45"/><polygon points="488.0,295.0 489.0,295.2 -910.1,693.1 -910.2,692.1" fill="#627686" fill-opacity="0.32"/><polygon points="375.9,296.3 375.0,296.6 1692.6,620.4 1692.5,619.5" fill="#627686" fill-opacity="0.32"/><line x1="519.2" y1="302.0" x2="-906.6" y2="727.3" stroke="#627686" stroke-width="1.4" stroke-opacity="0.45"/><line x1="345.8" y1="304.1" x2="1695.4" y2="650.8" stroke="#627686" stroke-width="1.4" stroke-opacity="0.45"/><line x1="551.2" y1="309.3" x2="-902.7" y2="765.4" stroke="#627686" stroke-width="1.4" stroke-opacity="0.45"/><line x1="314.7" y1="312.2" x2="1698.6" y2="684.8" stroke="#627686" stroke-width="1.4" stroke-opacity="0.45"/><line x1="584.5" y1="316.8" x2="-898.4" y2="807.6" stroke="#627686" stroke-width="1.4" stroke-opacity="0.45"/><line x1="282.1" y1="320.7" x2="1702.1" y2="722.3" stroke="#627686" stroke-width="1.4" stroke-opacity="0.45"/><line x1="619.4" y1="324.7" x2="-893.6" y2="854.4" stroke="#627686" stroke-width="1.4" stroke-opacity="0.45"/><line x1="247.9" y1="329.6" x2="1705.9" y2="764.0" stroke="#627686" stroke-width="1.4" stroke-opacity="0.45"/><line x1="655.8" y1="332.9" x2="-888.3" y2="906.7" stroke="#627686" stroke-width="1.4" stroke-opacity="0.45"/><line x1="211.8" y1="338.9" x2="1710.3" y2="810.6" stroke="#627686" stroke-width="1.4" stroke-opacity="0.45"/><polygon points="655.2,332.8 656.4,333.0 -888.2,907.6 -888.4,905.8" fill="#627686" fill-opacity="0.32"/><polygon points="212.4,338.8 211.2,339.1 1710.4,811.3 1710.2,809.8" fill="#627686" fill-opacity="0.32"/><line x1="693.9" y1="341.5" x2="-882.3" y2="965.5" stroke="#627686" stroke-width="1.4" stroke-opacity="0.45"/><line x1="173.8" y1="348.8" x2="1715.2" y2="862.9" stroke="#627686" stroke-width="1.4" stroke-opacity="0.45"/><line x1="733.9" y1="350.5" x2="-875.5" y2="1032.1" stroke="#627686" stroke-width="1.4" stroke-opacity="0.45"/><line x1="133.8" y1="359.2" x2="1720.7" y2="922.2" stroke="#627686" stroke-width="1.4" stroke-opacity="0.45"/><line x1="775.8" y1="360.0" x2="-867.7" y2="1108.3" stroke="#627686" stroke-width="1.4" stroke-opacity="0.45"/><line x1="91.5" y1="370.2" x2="1727.0" y2="990.0" stroke="#627686" stroke-width="1.4" stroke-opacity="0.45"/><line x1="819.7" y1="369.9" x2="-858.8" y2="1196.0" stroke="#627686" stroke-width="1.4" stroke-opacity="0.45"/><line x1="46.7" y1="381.8" x2="1734.3" y2="1068.2" stroke="#627686" stroke-width="1.4" stroke-opacity="0.45"/><line x1="866.0" y1="380.4" x2="-848.3" y2="1298.4" stroke="#627686" stroke-width="1.4" stroke-opacity="0.45"/><line x1="-0.8" y1="394.1" x2="1742.8" y2="1159.3" stroke="#627686" stroke-width="1.4" stroke-opacity="0.45"/><polygon points="865.2,380.2 866.7,380.5 -848.1,1300.2 -848.5,1296.6" fill="#627686" fill-opacity="0.32"/><polygon points="-0.0,393.9 -1.6,394.3 1742.9,1160.9 1742.6,1157.7" fill="#627686" fill-opacity="0.32"/><line x1="914.6" y1="391.4" x2="-836.0" y2="1419.2" stroke="#627686" stroke-width="1.4" stroke-opacity="0.45"/><line x1="-51.2" y1="407.2" x2="1752.8" y2="1266.9" stroke="#627686" stroke-width="1.4" stroke-opacity="0.45"/><line x1="965.9" y1="402.9" x2="-821.2" y2="1564.1" stroke="#627686" stroke-width="1.4" stroke-opacity="0.45"/><line x1="-104.8" y1="421.1" x2="1764.8" y2="1396.0" stroke="#627686" stroke-width="1.4" stroke-opacity="0.45"/><line x1="1020.0" y1="415.2" x2="-803.1" y2="1741.0" stroke="#627686" stroke-width="1.4" stroke-opacity="0.45"/><line x1="-161.9" y1="436.0" x2="1779.5" y2="1553.6" stroke="#627686" stroke-width="1.4" stroke-opacity="0.45"/><line x1="1077.3" y1="428.1" x2="-780.6" y2="1961.8" stroke="#627686" stroke-width="1.4" stroke-opacity="0.45"/><line x1="-222.9" y1="451.8" x2="1797.8" y2="1750.3" stroke="#627686" stroke-width="1.4" stroke-opacity="0.45"/><line x1="1137.9" y1="441.8" x2="-751.7" y2="2245.2" stroke="#627686" stroke-width="1.4" stroke-opacity="0.45"/><line x1="-288.2" y1="468.8" x2="1821.3" y2="2002.8" stroke="#627686" stroke-width="1.4" stroke-opacity="0.45"/><polygon points="1136.9,441.6 1138.9,442.0 -751.1,2250.4 -752.2,2240.1" fill="#627686" fill-opacity="0.32"/><polygon points="-287.2,468.5 -289.3,469.1 1821.8,2007.4 1820.9,1998.2" fill="#627686" fill-opacity="0.32"/><line x1="1202.1" y1="456.3" x2="-713.2" y2="2622.3" stroke="#627686" stroke-width="1.4" stroke-opacity="0.45"/><line x1="-358.3" y1="487.0" x2="1852.6" y2="2338.9" stroke="#627686" stroke-width="1.4" stroke-opacity="0.45"/><line x1="1270.4" y1="471.7" x2="-659.5" y2="3148.5" stroke="#627686" stroke-width="1.4" stroke-opacity="0.45"/><line x1="-433.7" y1="506.6" x2="1896.3" y2="2808.0" stroke="#627686" stroke-width="1.4" stroke-opacity="0.45"/><line x1="1343.1" y1="488.1" x2="-579.3" y2="3934.2" stroke="#627686" stroke-width="1.4" stroke-opacity="0.45"/><line x1="-515.0" y1="527.7" x2="1961.6" y2="3508.9" stroke="#627686" stroke-width="1.4" stroke-opacity="0.45"/><line x1="1420.6" y1="505.6" x2="-446.6" y2="5234.3" stroke="#627686" stroke-width="1.4" stroke-opacity="0.45"/><line x1="-603.0" y1="550.5" x2="2069.7" y2="4669.6" stroke="#627686" stroke-width="1.4" stroke-opacity="0.45"/><line x1="1503.4" y1="524.3" x2="-184.7" y2="7799.8" stroke="#627686" stroke-width="1.4" stroke-opacity="0.45"/><line x1="-698.5" y1="575.3" x2="2283.3" y2="6963.2" stroke="#627686" stroke-width="1.4" stroke-opacity="0.45"/><polygon points="1502.0,524.0 1504.8,524.7 -178.4,7861.3 -190.9,7739.2" fill="#627686" fill-opacity="0.32"/><polygon points="-696.9,574.9 -700.1,575.7 2288.4,7018.2 2278.3,6909.0" fill="#627686" fill-opacity="0.32"/><line x1="1592.2" y1="544.4" x2="573.5" y2="15228.7" stroke="#627686" stroke-width="1.4" stroke-opacity="0.45"/><line x1="-802.6" y1="602.3" x2="2904.3" y2="13630.0" stroke="#627686" stroke-width="1.4" stroke-opacity="0.45"/><line x1="1687.5" y1="565.9" x2="28907.1" y2="292818.3" stroke="#627686" stroke-width="1.4" stroke-opacity="0.45"/><line x1="-916.3" y1="631.9" x2="28907.1" y2="292818.3" stroke="#627686" stroke-width="1.4" stroke-opacity="0.45"/><line x1="1790.1" y1="589.1" x2="-2724.3" y2="-17080.9" stroke="#627686" stroke-width="1.4" stroke-opacity="0.45"/><line x1="-1041.3" y1="664.3" x2="228.9" y2="-15095.2" stroke="#627686" stroke-width="1.4" stroke-opacity="0.45"/><line x1="1901.0" y1="614.2" x2="-1829.9" y2="-8318.3" stroke="#627686" stroke-width="1.4" stroke-opacity="0.45"/><line x1="-1179.1" y1="700.1" x2="948.0" y2="-7373.6" stroke="#627686" stroke-width="1.4" stroke-opacity="0.45"/><line x1="2021.1" y1="641.3" x2="-1542.9" y2="-5506.6" stroke="#627686" stroke-width="1.4" stroke-opacity="0.45"/><line x1="-1331.8" y1="739.8" x2="1179.8" y2="-4885.1" stroke="#627686" stroke-width="1.4" stroke-opacity="0.45"/><polygon points="2019.1,640.8 2023.1,641.7 -1539.9,-5477.0 -1545.9,-5536.4" fill="#627686" fill-opacity="0.32"/><polygon points="-1329.2,739.1 -1334.4,740.4 1182.2,-4858.9 1177.3,-4911.6" fill="#627686" fill-opacity="0.32"/><line x1="2151.6" y1="670.8" x2="-1401.4" y2="-4120.3" stroke="#627686" stroke-width="1.4" stroke-opacity="0.45"/><line x1="-1502.2" y1="784.0" x2="1294.3" y2="-3656.3" stroke="#627686" stroke-width="1.4" stroke-opacity="0.45"/><line x1="2293.9" y1="702.9" x2="-1317.1" y2="-3294.7" stroke="#627686" stroke-width="1.4" stroke-opacity="0.45"/><line x1="-1693.3" y1="833.6" x2="1362.5" y2="-2923.8" stroke="#627686" stroke-width="1.4" stroke-opacity="0.45"/><line x1="2449.8" y1="738.1" x2="-1261.2" y2="-2746.8" stroke="#627686" stroke-width="1.4" stroke-opacity="0.45"/><line x1="-1909.2" y1="889.7" x2="1407.8" y2="-2437.5" stroke="#627686" stroke-width="1.4" stroke-opacity="0.45"/><line x1="2621.3" y1="776.9" x2="-1221.4" y2="-2356.7" stroke="#627686" stroke-width="1.4" stroke-opacity="0.45"/><line x1="-2155.1" y1="953.6" x2="1440.0" y2="-2091.2" stroke="#627686" stroke-width="1.4" stroke-opacity="0.45"/><line x1="2810.7" y1="819.6" x2="-1191.6" y2="-2064.8" stroke="#627686" stroke-width="1.4" stroke-opacity="0.45"/><line x1="-2437.7" y1="1026.9" x2="1464.2" y2="-1831.9" stroke="#627686" stroke-width="1.4" stroke-opacity="0.45"/><polygon points="2807.6,818.9 2813.9,820.4 -1191.2,-2060.8 -1192.0,-2068.9" fill="#627686" fill-opacity="0.32"/><polygon points="-2432.8,1025.7 -2442.6,1028.2 1464.5,-1828.3 1463.8,-1835.5" fill="#627686" fill-opacity="0.32"/><ellipse cx="86.7" cy="430.1" rx="2.2" ry="1.3" fill="none" stroke="#907880" stroke-width="0.9" stroke-opacity="0.6"/><ellipse cx="795.5" cy="417.7" rx="2.2" ry="1.3" fill="none" stroke="#7880a0" stroke-width="0.9" stroke-opacity="0.6"/><ellipse cx="118.5" cy="444.1" rx="2.2" ry="1.3" fill="none" stroke="#907880" stroke-width="0.9" stroke-opacity="0.6"/><ellipse cx="768.2" cy="432.3" rx="2.2" ry="1.3" fill="none" stroke="#7880a0" stroke-width="0.9" stroke-opacity="0.6"/><ellipse cx="152.4" cy="459.0" rx="2.2" ry="1.3" fill="none" stroke="#907880" stroke-width="0.9" stroke-opacity="0.6"/><ellipse cx="739.1" cy="447.9" rx="2.2" ry="1.3" fill="none" stroke="#7880a0" stroke-width="0.9" stroke-opacity="0.6"/><ellipse cx="188.4" cy="474.8" rx="2.2" ry="1.3" fill="none" stroke="#907880" stroke-width="0.9" stroke-opacity="0.6"/><ellipse cx="707.9" cy="464.6" rx="2.2" ry="1.3" fill="none" stroke="#7880a0" stroke-width="0.9" stroke-opacity="0.6"/><ellipse cx="267.6" cy="509.6" rx="2.2" ry="1.3" fill="none" stroke="#907880" stroke-width="0.9" stroke-opacity="0.6"/><ellipse cx="638.6" cy="501.7" rx="2.2" ry="1.3" fill="none" stroke="#7880a0" stroke-width="0.9" stroke-opacity="0.6"/><ellipse cx="311.5" cy="528.8" rx="2.2" ry="1.3" fill="none" stroke="#907880" stroke-width="0.9" stroke-opacity="0.6"/><ellipse cx="600.0" cy="522.4" rx="2.2" ry="1.3" fill="none" stroke="#7880a0" stroke-width="0.9" stroke-opacity="0.6"/><ellipse cx="358.4" cy="549.4" rx="2.2" ry="1.3" fill="none" stroke="#907880" stroke-width="0.9" stroke-opacity="0.6"/><ellipse cx="558.1" cy="544.8" rx="2.2" ry="1.3" fill="none" stroke="#7880a0" stroke-width="0.9" stroke-opacity="0.6"/><ellipse cx="409.0" cy="571.6" rx="2.2" ry="1.3" fill="none" stroke="#907880" stroke-width="0.9" stroke-opacity="0.6"/><ellipse cx="512.8" cy="569.1" rx="2.2" ry="1.3" fill="none" stroke="#7880a0" stroke-width="0.9" stroke-opacity="0.6"/><ellipse cx="522.4" cy="621.3" rx="2.2" ry="1.3" fill="none" stroke="#907880" stroke-width="0.9" stroke-opacity="0.6"/><ellipse cx="409.6" cy="624.3" rx="2.2" ry="1.3" fill="none" stroke="#7880a0" stroke-width="0.9" stroke-opacity="0.6"/><ellipse cx="586.3" cy="649.4" rx="2.2" ry="1.3" fill="none" stroke="#907880" stroke-width="0.9" stroke-opacity="0.6"/><ellipse cx="350.5" cy="656.0" rx="2.2" ry="1.3" fill="none" stroke="#7880a0" stroke-width="0.9" stroke-opacity="0.6"/><ellipse cx="655.9" cy="679.9" rx="2.2" ry="1.3" fill="none" stroke="#907880" stroke-width="0.9" stroke-opacity="0.6"/><ellipse cx="285.4" cy="690.8" rx="2.2" ry="1.3" fill="none" stroke="#7880a0" stroke-width="0.9" stroke-opacity="0.6"/><ellipse cx="731.9" cy="713.3" rx="2.2" ry="1.3" fill="none" stroke="#907880" stroke-width="0.9" stroke-opacity="0.6"/><ellipse cx="213.4" cy="729.4" rx="2.2" ry="1.3" fill="none" stroke="#7880a0" stroke-width="0.9" stroke-opacity="0.6"/><ellipse cx="907.4" cy="790.3" rx="2.2" ry="1.3" fill="none" stroke="#907880" stroke-width="0.9" stroke-opacity="0.6"/><ellipse cx="43.5" cy="820.4" rx="2.2" ry="1.3" fill="none" stroke="#7880a0" stroke-width="0.9" stroke-opacity="0.6"/><ellipse cx="1009.3" cy="835.1" rx="2.2" ry="1.3" fill="none" stroke="#907880" stroke-width="0.9" stroke-opacity="0.6"/><ellipse cx="-57.6" cy="874.5" rx="2.2" ry="1.3" fill="none" stroke="#7880a0" stroke-width="0.9" stroke-opacity="0.6"/><ellipse cx="1122.9" cy="884.9" rx="2.2" ry="1.3" fill="none" stroke="#907880" stroke-width="0.9" stroke-opacity="0.6"/><ellipse cx="-172.5" cy="936.1" rx="2.2" ry="1.3" fill="none" stroke="#7880a0" stroke-width="0.9" stroke-opacity="0.6"/><ellipse cx="1250.2" cy="940.7" rx="2.2" ry="1.3" fill="none" stroke="#907880" stroke-width="0.9" stroke-opacity="0.6"/><ellipse cx="-304.2" cy="1006.5" rx="2.2" ry="1.3" fill="none" stroke="#7880a0" stroke-width="0.9" stroke-opacity="0.6"/><text transform="matrix(1.7933 0.7718 -0.9250 0.8587 809.0 734.2)" x="0" y="7" font-size="20" font-weight="bold" text-anchor="middle" fill="#a07a80" fill-opacity="1.0">5</text><text transform="matrix(0.8198 0.3531 -1.0676 0.3910 227.6 484.4)" x="0" y="7" font-size="20" font-weight="bold" text-anchor="middle" fill="#a08088" fill-opacity="0.75">5</text><text transform="matrix(-1.1988 -0.8917 1.8182 -0.9929 129.1 790.8)" x="0" y="7" font-size="20" font-weight="bold" text-anchor="middle" fill="#8a8eb0" fill-opacity="1.0">5</text><text transform="matrix(-1.1328 -0.3627 0.7402 -0.4017 670.1 492.1)" x="0" y="7" font-size="20" font-weight="bold" text-anchor="middle" fill="#7a88a8" fill-opacity="0.8">5</text><ellipse cx="461.5" cy="605.5" rx="8.5" ry="3.8" fill="none" stroke="#6a6a8e" stroke-width="2.4" stroke-opacity="0.75"/><polygon points="317.5,567.3 355.5,549.2 390.3,533.4 423.2,547.3 458.4,562.5 495.3,577.5 534.4,593.4 574.1,610.7 617.4,628.6 583.2,650.4 547.3,674.5 503.4,653.3 540.3,631.4 499.1,613.4 460.1,596.5 423.2,580.6 388.4,564.4 351.3,582.5" fill="#f3f3f3" stroke="#d0d0d0" stroke-width="0.6"/><line x1="355.5" y1="549.2" x2="388.4" y2="564.4" stroke="#8a8a8a" stroke-width="0.8"/><line x1="423.2" y1="547.3" x2="388.4" y2="564.4" stroke="#8a8a8a" stroke-width="0.8"/><line x1="458.4" y1="562.5" x2="423.2" y2="580.6" stroke="#8a8a8a" stroke-width="0.8"/><line x1="495.3" y1="577.5" x2="460.1" y2="596.5" stroke="#8a8a8a" stroke-width="0.8"/><line x1="534.4" y1="593.4" x2="499.1" y2="613.4" stroke="#8a8a8a" stroke-width="0.8"/><line x1="574.1" y1="610.7" x2="540.3" y2="631.4" stroke="#8a8a8a" stroke-width="0.8"/><line x1="540.3" y1="631.4" x2="583.2" y2="650.4" stroke="#8a8a8a" stroke-width="0.8"/><defs><linearGradient id="nrm" x1="0" y1="1" x2="0" y2="0"><stop offset="0" stop-color="#2a7a3a"/><stop offset="1" stop-color="#208a80"/></linearGradient></defs><path d="M389.6,532.4 L391.0,532.4 L390.5,523.4 Z" fill="url(#nrm)"/><path d="M353.5,548.2 L354.9,548.2 L354.4,540.2 Z" fill="url(#nrm)"/><path d="M357.8,548.2 L359.2,548.2 L358.7,535.2 Z" fill="url(#nrm)"/><path d="M320.3,566.3 L321.7,566.3 L321.2,552.3 Z" fill="url(#nrm)"/><path d="M350.6,581.5 L352.0,581.5 L351.5,567.5 Z" fill="url(#nrm)"/><path d="M383.2,563.4 L384.6,563.4 L384.1,550.4 Z" fill="url(#nrm)"/><path d="M387.7,563.4 L389.1,563.4 L388.6,546.4 Z" fill="url(#nrm)"/><path d="M391.2,563.4 L392.6,563.4 L392.1,551.4 Z" fill="url(#nrm)"/><path d="M419.0,546.3 L420.4,546.3 L419.9,533.3 Z" fill="url(#nrm)"/><path d="M423.0,546.3 L424.4,546.3 L423.9,535.3 Z" fill="url(#nrm)"/><path d="M423.0,579.6 L424.4,579.6 L423.9,565.6 Z" fill="url(#nrm)"/><path d="M427.0,579.6 L428.4,579.6 L427.9,565.6 Z" fill="url(#nrm)"/><path d="M454.2,561.5 L455.6,561.5 L455.1,547.5 Z" fill="url(#nrm)"/><path d="M458.2,561.5 L459.6,561.5 L459.1,550.5 Z" fill="url(#nrm)"/><path d="M459.9,595.5 L461.3,595.5 L460.8,581.5 Z" fill="url(#nrm)"/><path d="M463.9,595.5 L465.3,595.5 L464.8,581.5 Z" fill="url(#nrm)"/><path d="M491.1,576.5 L492.5,576.5 L492.0,563.5 Z" fill="url(#nrm)"/><path d="M495.1,576.5 L496.5,576.5 L496.0,565.5 Z" fill="url(#nrm)"/><path d="M498.9,612.4 L500.3,612.4 L499.8,598.4 Z" fill="url(#nrm)"/><path d="M502.9,612.4 L504.3,612.4 L503.8,598.4 Z" fill="url(#nrm)"/><path d="M530.2,592.4 L531.6,592.4 L531.1,579.4 Z" fill="url(#nrm)"/><path d="M534.2,592.4 L535.6,592.4 L535.1,581.4 Z" fill="url(#nrm)"/><path d="M538.6,630.4 L540.0,630.4 L539.5,616.4 Z" fill="url(#nrm)"/><path d="M543.1,630.4 L544.5,630.4 L544.0,616.4 Z" fill="url(#nrm)"/><path d="M569.9,609.7 L571.3,609.7 L570.8,596.7 Z" fill="url(#nrm)"/><path d="M574.9,609.7 L576.3,609.7 L575.8,598.7 Z" fill="url(#nrm)"/><path d="M580.0,649.4 L581.4,649.4 L580.9,634.4 Z" fill="url(#nrm)"/><path d="M583.5,649.4 L584.9,649.4 L584.4,634.4 Z" fill="url(#nrm)"/><path d="M615.2,627.6 L616.6,627.6 L616.1,616.6 Z" fill="url(#nrm)"/><path d="M506.7,652.3 L508.1,652.3 L507.6,638.3 Z" fill="url(#nrm)"/><path d="M547.1,673.5 L548.5,673.5 L548.0,658.5 Z" fill="url(#nrm)"/><path d="M534.7,759.7 L536.1,759.7 L535.6,748.7 Z" fill="url(#nrm)"/><path d="M504.7,783.4 L506.1,783.4 L505.6,769.4 Z" fill="url(#nrm)"/><path d="M570.6,780.7 L572.0,780.7 L571.5,767.7 Z" fill="url(#nrm)"/><path d="M541.1,806.6 L542.5,806.6 L542.0,792.6 Z" fill="url(#nrm)"/><line x1="350" y1="585" x2="346" y2="592" stroke="#3a7a4a" stroke-width="1"/><line x1="499" y1="786" x2="492" y2="790" stroke="#3a7a4a" stroke-width="1"/><circle cx="390.3" cy="533.4" r="1.8" fill="#0a0ac8" stroke="#000050" stroke-width="0.4"/><circle cx="355.5" cy="549.2" r="1.8" fill="#0a0ac8" stroke="#000050" stroke-width="0.4"/><circle cx="317.5" cy="567.3" r="1.8" fill="#0a0ac8" stroke="#000050" stroke-width="0.4"/><circle cx="351.3" cy="582.5" r="1.8" fill="#0a0ac8" stroke="#000050" stroke-width="0.4"/><circle cx="388.4" cy="564.4" r="1.8" fill="#0a0ac8" stroke="#000050" stroke-width="0.4"/><circle cx="423.2" cy="547.3" r="1.8" fill="#0a0ac8" stroke="#000050" stroke-width="0.4"/><circle cx="423.2" cy="580.6" r="1.8" fill="#0a0ac8" stroke="#000050" stroke-width="0.4"/><circle cx="458.4" cy="562.5" r="1.8" fill="#0a0ac8" stroke="#000050" stroke-width="0.4"/><circle cx="460.1" cy="596.5" r="1.8" fill="#0a0ac8" stroke="#000050" stroke-width="0.4"/><circle cx="495.3" cy="577.5" r="1.8" fill="#0a0ac8" stroke="#000050" stroke-width="0.4"/><circle cx="499.1" cy="613.4" r="1.8" fill="#0a0ac8" stroke="#000050" stroke-width="0.4"/><circle cx="534.4" cy="593.4" r="1.8" fill="#0a0ac8" stroke="#000050" stroke-width="0.4"/><circle cx="540.3" cy="631.4" r="1.8" fill="#0a0ac8" stroke="#000050" stroke-width="0.4"/><circle cx="574.1" cy="610.7" r="1.8" fill="#0a0ac8" stroke="#000050" stroke-width="0.4"/><circle cx="583.2" cy="650.4" r="1.8" fill="#0a0ac8" stroke="#000050" stroke-width="0.4"/><circle cx="617.4" cy="628.6" r="1.8" fill="#0a0ac8" stroke="#000050" stroke-width="0.4"/><circle cx="503.4" cy="653.3" r="1.8" fill="#0a0ac8" stroke="#000050" stroke-width="0.4"/><circle cx="547.3" cy="674.5" r="1.8" fill="#0a0ac8" stroke="#000050" stroke-width="0.4"/><circle cx="534.4" cy="760.7" r="1.8" fill="#0a0ac8" stroke="#000050" stroke-width="0.4"/><circle cx="500.4" cy="784.4" r="1.8" fill="#0a0ac8" stroke="#000050" stroke-width="0.4"/><circle cx="574.3" cy="781.7" r="1.8" fill="#0a0ac8" stroke="#000050" stroke-width="0.4"/><circle cx="540.3" cy="807.6" r="1.8" fill="#0a0ac8" stroke="#000050" stroke-width="0.4"/><text x="391.5" y="546.3" font-size="10" font-weight="bold" fill="#1212f0" textLength="5.7" lengthAdjust="spacingAndGlyphs" stroke="#ffffff" stroke-opacity="0.25" stroke-width="1.2" paint-order="stroke">0</text><text x="356.7" y="562.1" font-size="10" font-weight="bold" fill="#1212f0" textLength="11.4" lengthAdjust="spacingAndGlyphs" stroke="#ffffff" stroke-opacity="0.25" stroke-width="1.2" paint-order="stroke">25</text><text x="318.7" y="580.2" font-size="10" font-weight="bold" fill="#1212f0" textLength="5.7" lengthAdjust="spacingAndGlyphs" stroke="#ffffff" stroke-opacity="0.25" stroke-width="1.2" paint-order="stroke">2</text><text x="352.5" y="595.4" font-size="10" font-weight="bold" fill="#1212f0" textLength="11.4" lengthAdjust="spacingAndGlyphs" stroke="#ffffff" stroke-opacity="0.25" stroke-width="1.2" paint-order="stroke">36</text><text x="389.6" y="577.3" font-size="10" font-weight="bold" fill="#1212f0" textLength="11.4" lengthAdjust="spacingAndGlyphs" stroke="#ffffff" stroke-opacity="0.25" stroke-width="1.2" paint-order="stroke">37</text><text x="424.4" y="560.2" font-size="10" font-weight="bold" fill="#1212f0" textLength="11.4" lengthAdjust="spacingAndGlyphs" stroke="#ffffff" stroke-opacity="0.25" stroke-width="1.2" paint-order="stroke">31</text><text x="424.4" y="593.5" font-size="10" font-weight="bold" fill="#1212f0" textLength="11.4" lengthAdjust="spacingAndGlyphs" stroke="#ffffff" stroke-opacity="0.25" stroke-width="1.2" paint-order="stroke">21</text><text x="459.6" y="575.4" font-size="10" font-weight="bold" fill="#1212f0" textLength="11.4" lengthAdjust="spacingAndGlyphs" stroke="#ffffff" stroke-opacity="0.25" stroke-width="1.2" paint-order="stroke">30</text><text x="461.3" y="609.4" font-size="10" font-weight="bold" fill="#1212f0" textLength="11.4" lengthAdjust="spacingAndGlyphs" stroke="#ffffff" stroke-opacity="0.25" stroke-width="1.2" paint-order="stroke">20</text><text x="496.5" y="590.4" font-size="10" font-weight="bold" fill="#1212f0" textLength="11.4" lengthAdjust="spacingAndGlyphs" stroke="#ffffff" stroke-opacity="0.25" stroke-width="1.2" paint-order="stroke">29</text><text x="500.3" y="626.3" font-size="10" font-weight="bold" fill="#1212f0" textLength="11.4" lengthAdjust="spacingAndGlyphs" stroke="#ffffff" stroke-opacity="0.25" stroke-width="1.2" paint-order="stroke">19</text><text x="535.6" y="606.3" font-size="10" font-weight="bold" fill="#1212f0" textLength="11.4" lengthAdjust="spacingAndGlyphs" stroke="#ffffff" stroke-opacity="0.25" stroke-width="1.2" paint-order="stroke">28</text><text x="541.5" y="644.3" font-size="10" font-weight="bold" fill="#1212f0" textLength="11.4" lengthAdjust="spacingAndGlyphs" stroke="#ffffff" stroke-opacity="0.25" stroke-width="1.2" paint-order="stroke">18</text><text x="575.3" y="623.6" font-size="10" font-weight="bold" fill="#1212f0" textLength="11.4" lengthAdjust="spacingAndGlyphs" stroke="#ffffff" stroke-opacity="0.25" stroke-width="1.2" paint-order="stroke">27</text><text x="584.4" y="663.3" font-size="10" font-weight="bold" fill="#1212f0" textLength="11.4" lengthAdjust="spacingAndGlyphs" stroke="#ffffff" stroke-opacity="0.25" stroke-width="1.2" paint-order="stroke">24</text><text x="618.6" y="641.5" font-size="10" font-weight="bold" fill="#1212f0" textLength="5.7" lengthAdjust="spacingAndGlyphs" stroke="#ffffff" stroke-opacity="0.25" stroke-width="1.2" paint-order="stroke">1</text><text x="504.6" y="666.2" font-size="10" font-weight="bold" fill="#1212f0" textLength="11.4" lengthAdjust="spacingAndGlyphs" stroke="#ffffff" stroke-opacity="0.25" stroke-width="1.2" paint-order="stroke">26</text><text x="548.5" y="687.4" font-size="10" font-weight="bold" fill="#1212f0" textLength="5.7" lengthAdjust="spacingAndGlyphs" stroke="#ffffff" stroke-opacity="0.25" stroke-width="1.2" paint-order="stroke">3</text><text x="535.6" y="773.6" font-size="10" font-weight="bold" fill="#1212f0" textLength="11.4" lengthAdjust="spacingAndGlyphs" stroke="#ffffff" stroke-opacity="0.25" stroke-width="1.2" paint-order="stroke">39</text><text x="501.6" y="797.3" font-size="10" font-weight="bold" fill="#1212f0" textLength="11.4" lengthAdjust="spacingAndGlyphs" stroke="#ffffff" stroke-opacity="0.25" stroke-width="1.2" paint-order="stroke">38</text><text x="575.5" y="794.6" font-size="10" font-weight="bold" fill="#1212f0" textLength="11.4" lengthAdjust="spacingAndGlyphs" stroke="#ffffff" stroke-opacity="0.25" stroke-width="1.2" paint-order="stroke">34</text><text x="541.5" y="820.5" font-size="10" font-weight="bold" fill="#1212f0" textLength="11.4" lengthAdjust="spacingAndGlyphs" stroke="#ffffff" stroke-opacity="0.25" stroke-width="1.2" paint-order="stroke">32</text><text x="387" y="554" font-size="10" font-weight="bold" fill="#701a48" textLength="5.9" lengthAdjust="spacingAndGlyphs">0</text><text x="351" y="571" font-size="10" font-weight="bold" fill="#701a48" textLength="5.9" lengthAdjust="spacingAndGlyphs">6</text><text x="421" y="568.8" font-size="10" font-weight="bold" fill="#701a48" textLength="5.9" lengthAdjust="spacingAndGlyphs">1</text><text x="456.5" y="585" font-size="10" font-weight="bold" fill="#701a48" textLength="5.9" lengthAdjust="spacingAndGlyphs">2</text><text x="494.5" y="601.2" font-size="10" font-weight="bold" fill="#701a48" textLength="5.9" lengthAdjust="spacingAndGlyphs">3</text><text x="534.6" y="618.1" font-size="10" font-weight="bold" fill="#701a48" textLength="5.9" lengthAdjust="spacingAndGlyphs">4</text><text x="576.6" y="636.5" font-size="10" font-weight="bold" fill="#701a48" textLength="5.9" lengthAdjust="spacingAndGlyphs">5</text><text x="541" y="658.2" font-size="10" font-weight="bold" fill="#701a48" textLength="5.9" lengthAdjust="spacingAndGlyphs">7</text><text x="534.7" y="789.1" font-size="10" font-weight="bold" fill="#701a48" textLength="5.9" lengthAdjust="spacingAndGlyphs">8</text><text x="440" y="677.2" font-size="10" font-weight="bold" fill="#701a48" textLength="5.9" lengthAdjust="spacingAndGlyphs">9</text></g><rect x="771.5" y="490.4" width="61.1" height="22.8" rx="11.4" fill="#4a5a62" fill-opacity="0.55" stroke="#b8c2c6" stroke-width="1.1"/><rect x="839.4" y="490.4" width="72.6" height="22.8" rx="11.4" fill="#4a5a62" fill-opacity="0.55" stroke="#b8c2c6" stroke-width="1.1"/><text x="781.1" y="506.1" font-size="13" fill="#e0e0e0" font-weight="normal" font-style="normal" textLength="33.3" lengthAdjust="spacingAndGlyphs">Persp</text><path d="M817,501.5 L822.8,501.5 L819.9,504.6 Z" fill="#e8e8e8"/><text x="849.2" y="506.1" font-size="13" fill="#e0e0e0" font-weight="normal" font-style="normal" textLength="44.6" lengthAdjust="spacingAndGlyphs">No cam</text><path d="M896.8,501.5 L903.2,501.5 L900.0,504.6 Z" fill="#e8e8e8"/><path d="M24.1,816.7 L24.1,803" stroke="#30e030" stroke-width="1.3"/><path d="M24.1,816.7 L37,822.5" stroke="#f02020" stroke-width="1.3"/><path d="M24.1,816.7 L18,819" stroke="#2020f0" stroke-width="1.3"/><text x="23.6" y="804" font-size="12" fill="#30e030" textLength="7" lengthAdjust="spacingAndGlyphs">y</text><text x="37.5" y="823.2" font-size="11" fill="#f02020" textLength="6" lengthAdjust="spacingAndGlyphs">x</text><text x="11.5" y="823.4" font-size="11" font-weight="bold" fill="#1010f0" textLength="7" lengthAdjust="spacingAndGlyphs">z</text><rect x="918" y="485" width="29" height="350" fill="#3a3a3a"/><rect x="918" y="485" width="1" height="350" fill="#2a2a2a"/><rect x="946" y="485" width="1" height="350" fill="#0c0c0c"/><defs><linearGradient id="sbg" x1="0" y1="0" x2="0" y2="1"><stop offset="0" stop-color="#5a5a5a"/><stop offset="1" stop-color="#3a3a3a"/></linearGradient></defs><rect x="919" y="485" width="27" height="8" fill="url(#sbg)"/><path d="M940,487 L945,489.4 L940,491.8 Z" fill="#0a0a0a"/><rect x="919" y="493" width="27" height="1" fill="#0c0c0c"/><defs><linearGradient id="rtb" x1="0" y1="0" x2="0" y2="1"><stop offset="0" stop-color="#6c7d84"/><stop offset="1" stop-color="#8c9a9e"/></linearGradient></defs><rect x="920.8" y="516.5" width="23.6" height="24.7" fill="url(#rtb)"/><rect x="920.8" y="516.5" width="23.6" height="1" fill="#2a2a2a"/><rect x="920.8" y="516.5" width="1" height="24.7" fill="#2a2a2a"/><rect x="920.8" y="680.7" width="23.6" height="23.8" fill="url(#rtb)"/><rect x="920.8" y="680.7" width="23.6" height="1" fill="#2a2a2a"/><rect x="920.8" y="680.7" width="1" height="23.8" fill="#2a2a2a"/><rect x="920.8" y="767" width="23.6" height="23.9" fill="url(#rtb)"/><rect x="920.8" y="767" width="23.6" height="1" fill="#2a2a2a"/><rect x="920.8" y="767" width="1" height="23.9" fill="#2a2a2a"/><rect x="920.8" y="793.7" width="23.6" height="19.3" fill="url(#rtb)"/><rect x="920.8" y="793.7" width="23.6" height="1" fill="#2a2a2a"/><rect x="920.8" y="793.7" width="1" height="19.3" fill="#2a2a2a"/><path d="M922.9,531.8 L931.9,527.6 L941,531.8 L931.9,537.5 Z" fill="#d4d8d8" stroke="#111" stroke-width="1"/><path d="M927.4,529.7 L936.4,534.7 M936.4,529.7 L927.4,534.7" stroke="#111" stroke-width="1.6"/><path d="M940.3,534 L944,537.5 L940.3,541 Z" fill="#111"/><path d="M924,549.5 L934.4,549.5 L939.2,559.9 L925.7,562 Z" fill="#2e3a30" stroke="#7ad040" stroke-width="1.1"/><path d="M924.8,555 L938,555" stroke="#5a9a40" stroke-width="0.8"/><circle cx="931.9" cy="555.8" r="2.9" fill="none" stroke="#e0e0e0" stroke-width="1.2"/><path d="M940,560 L943.7,563.7 L940,567.5 Z" fill="#8a8a8a"/><path d="M928.5,581.5 L928.5,578.5 Q928.5,574.8 932.4,574.8 Q936.4,574.8 936.4,578.5 L936.4,581.5" stroke="#d8d8d8" stroke-width="1.8" fill="none"/><rect x="925.5" y="581.2" width="13.2" height="9.8" rx="0.8" fill="#d6d6d6"/><rect x="925.5" y="584.2" width="13.2" height="0.9" fill="#8a8a8a"/><rect x="925.5" y="587.4" width="13.2" height="0.9" fill="#8a8a8a"/><path d="M928.5,613 Q925.8,610 926.3,606.5 Q927,601.6 932.1,601.6 Q937.2,601.6 937.9,606.5 Q938.4,610 935.7,613 L935.5,616 L928.7,616 Z" fill="#3c3c3c" stroke="#b8b8b8" stroke-width="1"/><path d="M929.8,604.8 l4.6,4.6 M934.4,604.8 l-4.6,4.6" stroke="#f0f0f0" stroke-width="1.5"/><rect x="929.5" y="616" width="5" height="3" fill="#666"/><circle cx="931.5" cy="636.8" r="8" fill="#9a9a9a"/><circle cx="931.5" cy="636.8" r="7.2" fill="#d8d8d8"/><circle cx="932.5" cy="637.3" r="5.2" fill="#777"/><rect x="929.8" y="633.5" width="5.4" height="7.6" rx="1" fill="#f0f0f0"/><rect x="931.9" y="633.5" width="0.9" height="7.6" fill="#888"/><path d="M940,641 L944,645 L940,649 Z" fill="#8a8a8a"/><path d="M928.9,666 Q926.4,663 926.9,659.6 Q927.6,654.9 932.1,654.9 Q936.6,654.9 937.3,659.6 Q937.8,663 935.3,666 L935,668.5 L929.2,668.5 Z" fill="#c8c8b6"/><rect x="929.5" y="668.5" width="5.2" height="3.5" fill="#6a6a66"/><path d="M940,667 L944,671 L940,675 Z" fill="#8a8a8a"/><path d="M923.8,688 L931,684.5 L939.8,687 L939.8,698 L932,702.6 L923.8,699.5 Z" fill="#e8e8e8"/><path d="M923.8,688 L931,684.5 L934.5,685.5 L927.5,689.2 Z" fill="#222"/><path d="M931,691 L939.8,687 L939.8,692.5 L932,696.5 Z" fill="#333"/><path d="M923.8,693.5 L927.8,695 L927.8,701 L923.8,699.5 Z" fill="#222"/><path d="M927.8,689.5 L932,691 L932,696.5 L927.8,695 Z" fill="#555"/><path d="M932,696.5 L936,694.5 L936,700.5 L932,702.6 Z" fill="#222"/><path d="M940.3,697 L944,700.5 L940.3,704 Z" fill="#111"/><path d="M923,713 Q930,710 936,715 L940.7,720 Q937,724 932,722.5 Q928,721.5 926,717 Z" fill="#e0e0e0" stroke="#222" stroke-width="0.7"/><path d="M928.5,717.5 Q932,720.5 937,720" stroke="#1a1a1a" stroke-width="2.2" fill="none"/><path d="M936,726.3 L943.6,726.3 L939.8,731 Z" fill="#8a8a8a"/><path d="M924.5,738 Q931,735 937,740 L940.7,744.5 Q937,748.5 932,747 Q928,746 926.5,742 Z" fill="#e0e0e0" stroke="#222" stroke-width="0.7"/><path d="M929,742 Q932,745 937,744.5" stroke="#1a1a1a" stroke-width="2.2" fill="none"/><rect x="922.7" y="745" width="12" height="8" rx="1" fill="#cfcfcf" stroke="#333" stroke-width="0.6"/><path d="M926.5,746.5 L931,749 L926.5,751.5 Z" fill="#888"/><path d="M940,743.4 L944,749.5 L940,755.7 Z" fill="#8a8a8a"/><rect x="919" y="759" width="27" height="1" fill="#2a2a2a"/><defs><radialGradient id="dotg" cx="0.35" cy="0.35" r="0.7"><stop offset="0" stop-color="#ffffff"/><stop offset="1" stop-color="#9a9a9a"/></radialGradient></defs><circle cx="931.2" cy="779.5" r="3.4" fill="url(#dotg)" stroke="#333" stroke-width="0.5"/><path d="M930.5,806.5 L937.8,797.5" stroke="#f0f0f0" stroke-width="1.8" stroke-linecap="round"/><path d="M930.5,806.5 L937.8,797.5" stroke="#333" stroke-width="0.5"/><circle cx="929.3" cy="808" r="3.6" fill="url(#dotg)" stroke="#333" stroke-width="0.5"/><path d="M928.4,821.2 L936,821.2 L932.2,828 Z" fill="#6a6a6a"/></svg>
</body></html>
